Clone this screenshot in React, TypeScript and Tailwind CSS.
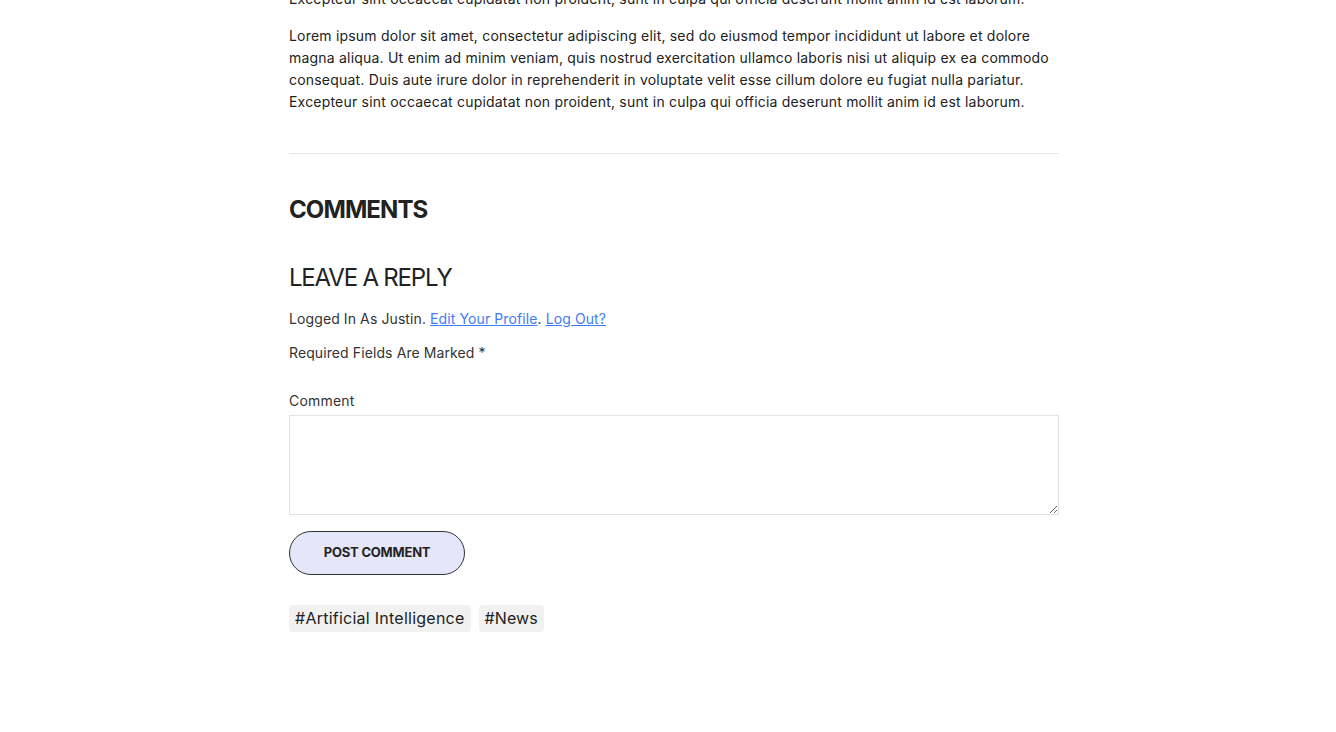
import React from 'react';

const lines = [
  'Lorem ipsum dolor sit amet, consectetur adipiscing elit, sed do eiusmod tempor incididunt ut labore et dolore',
  'magna aliqua. Ut enim ad minim veniam, quis nostrud exercitation ullamco laboris nisi ut aliquip ex ea commodo',
  'consequat. Duis aute irure dolor in reprehenderit in voluptate velit esse cillum dolore eu fugiat nulla pariatur.',
  'Excepteur sint occaecat cupidatat non proident, sunt in culpa qui officia deserunt mollit anim id est laborum.',
];

export default function App() {
  return (
    <div className="min-h-screen bg-white text-[#222] overflow-hidden" style={{ fontFamily: 'Inter, "Noto Sans", sans-serif' }}>
      <div className="w-[770px] ml-[289px] -mt-[12px]">
        {/* Article end */}
        <p className="text-[14px] leading-[22px] tracking-[0.2px] mb-[15px] whitespace-nowrap">{lines[3]}</p>
        <p className="text-[14px] leading-[22px] tracking-[0.2px] whitespace-nowrap">
          {lines.map((l, i) => (
            <span key={i} className="block">{l}</span>
          ))}
        </p>

        <hr className="mt-[40px] border-0 border-t border-[#e8e8e8]" />

        {/* Comments */}
        <h2 className="mt-[40px] text-[24px] leading-[32px] font-bold tracking-[-0.9px] text-[#222]">COMMENTS</h2>

        <h3 className="mt-[37px] text-[24px] leading-[30px] font-normal tracking-[-1.2px] text-[#222]">LEAVE A REPLY</h3>

        <p className="mt-[15px] text-[14px] leading-[22px] tracking-[0.1px] text-[#333]">
          Logged In As Justin.{' '}
          <a href="#" className="text-[#3f7bf6] underline">Edit Your Profile</a>.{' '}
          <a href="#" className="text-[#3f7bf6] underline">Log Out?</a>
        </p>
        <p className="mt-[12px] text-[14px] leading-[22px] tracking-[0.1px] text-[#333]">
          Required Fields Are Marked <span className="text-[#333]">*</span>
        </p>

        <label className="block mt-[26px] text-[14px] leading-[22px] tracking-[0.2px] text-[#333]">Comment</label>
        <textarea className="block mt-[3px] w-[770px] h-[100px] border border-[#e2e2e2] bg-white outline-none" />

        <button className="mt-[16px] w-[176px] h-[44px] rounded-full border border-[#333] bg-[#e6e6fa] text-[13px] font-bold tracking-[-0.2px] text-[#222]">
          POST COMMENT
        </button>

        <div className="mt-[30px] flex gap-[8px]">
          <span className="h-[27px] px-[6px] rounded-[4px] bg-[#f1f1f1] text-[16px] leading-[27px] tracking-[0.25px] text-[#222]">#Artificial Intelligence</span>
          <span className="h-[27px] px-[6px] rounded-[4px] bg-[#f1f1f1] text-[16px] leading-[27px] tracking-[0.1px] text-[#222]">#News</span>
        </div>
      </div>
    </div>
  );
}
